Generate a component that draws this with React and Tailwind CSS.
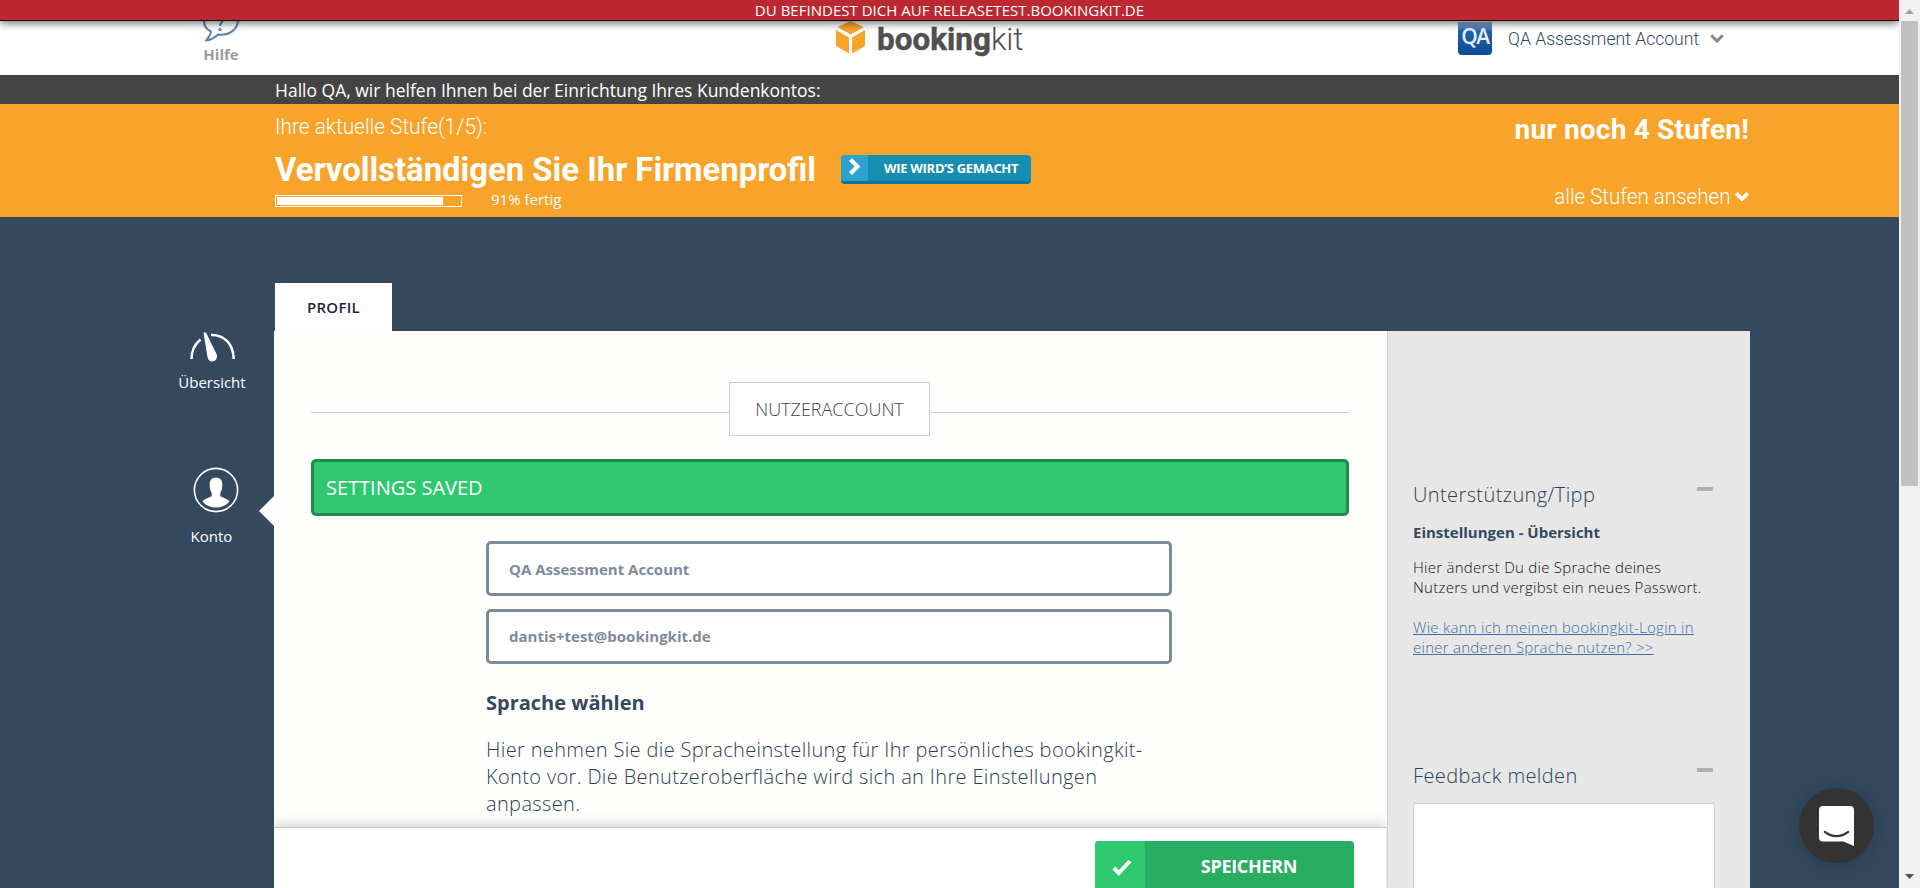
import React from "react";

const LOGO = "font-['Roboto',sans-serif]";

function Logo() {
  return (
    <svg width="190" height="54" viewBox="0 0 190 54" className="block">
      <g fill="#f7a42a">
        <path d="M14.5 0 L28 6 L14.5 13.6 L1.5 6 Z" />
        <path d="M0 9 L13 16.6 V32.6 L0 25 Z" />
        <path d="M29 9 L16 16.6 V32.6 L29 25 Z" />
      </g>
      <text x="41" y="28.5" textLength="146.500" lengthAdjust="spacingAndGlyphs" fontFamily="Roboto, sans-serif" fontSize="32" fill="#50504f">
        <tspan fontWeight="700" stroke="#50504f" strokeWidth="0.5">booking</tspan>
        <tspan fontWeight="300">kit</tspan>
      </text>
    </svg>
  );
}

function HelpIcon() {
  return (
    <svg width="38" height="22" viewBox="0 0 38 22" className="block" fill="none" stroke="#5a82ad" strokeWidth="2">
      <path d="M2 0 C2 5 5 8.500 9 10.500 C9 14 6 17 4 19.500 C9 19 13 16.500 16 13.500 C27 15 35 9 36 0" strokeLinejoin="round" />
      <path d="M21 -2 C21 1.500 18 1.500 18 5" />
      <circle cx="18" cy="8.500" r="1.600" fill="#5a82ad" stroke="none" />
    </svg>
  );
}

function GaugeIcon() {
  return (
    <svg width="46" height="31" viewBox="0 0 46 31" className="block">
      <path d="M1.500 27 C1.500 18 5 12 10.500 7.500" fill="none" stroke="#fff" strokeWidth="2.500" />
      <path d="M21 3 C34 2.500 43.500 12 43.700 27" fill="none" stroke="#fff" strokeWidth="2.500" />
      <path d="M13.500 1 Q15 -0.500 16.500 1.500 L27 23 Q27.500 29 22.500 29.500 Q18.500 29.500 17.500 25 Z" fill="#fff" />
    </svg>
  );
}

function UserIcon() {
  return (
    <svg width="46" height="46" viewBox="0 0 46 46" className="block">
      <circle cx="23" cy="23" r="21.600" fill="none" stroke="#fff" strokeWidth="1.600" />
      <path d="M23 10.500 C27.500 10.500 29.300 13.500 29.300 17.500 C29.300 21 28.700 24 27.300 26 V29 C30 31 34.500 31.500 36.500 34.500 C33 38.500 28.500 40.500 23 40.500 C17.500 40.500 13 38.500 9.500 34.500 C11.500 31.500 16 31 18.700 29 V26 C17.300 24 16.700 21 16.700 17.500 C16.700 13.500 18.500 10.500 23 10.500 Z" fill="#fff" />
    </svg>
  );
}

function Chevron({ className, width = 14, height = 9, stroke = 3 }) {
  return (
    <svg width={width} height={height} viewBox="0 0 14 9" className={className} fill="none" stroke="currentColor" strokeWidth={stroke}>
      <path d="M1.200 1.300 L7 7 L12.800 1.300" />
    </svg>
  );
}

function Header() {
  return (
    <header className="flex h-[54px] shrink-0 overflow-hidden bg-white">
      <div className="ml-[202px] flex w-[38px] flex-col items-center">
        <HelpIcon />
        <span className="mt-[1px] text-[15px] font-bold leading-[20px] text-[#9b9b9b]">Hilfe</span>
      </div>
      <div className="ml-[596px] w-[190px]">
        <Logo />
      </div>
      <div className="ml-[432px] flex">
        <div className="mt-px flex h-[33px] w-[34px] items-center justify-center rounded-b-[4px] bg-linear-to-b from-[#8fb0d6] from-0% via-[#1f5fa8] via-30% to-[#0b4c94] text-[21px] font-semibold leading-none tracking-[-1.5px] text-[#e4eefa]">
          <span className="-mt-[4px]">QA</span>
        </div>
        <div className="ml-[16px] mt-[6px] w-[190px]">
          <span className={`${LOGO} inline-block origin-left scale-x-[0.925] whitespace-nowrap text-[19px] font-light leading-[24px] text-[#34495e]`}>QA Assessment Account</span>
        </div>
        <Chevron className="ml-[12px] mt-[13px] text-[#7d8b99]" />
      </div>
    </header>
  );
}

function StepBanner() {
  return (
    <section className="flex h-[113px] shrink-0 justify-between bg-[#f8a42b] pl-[275px] pr-[150px] text-white">
      <div className="flex flex-col">
        <div className={`${LOGO} mt-[9px] origin-left scale-x-[0.946] whitespace-nowrap text-[22px] font-light leading-[28px]`}>Ihre aktuelle Stufe(1/5):</div>
        <div className="mt-[9px] flex h-[45px]">
          <div className="w-[566px]">
            <h1 className={`${LOGO} w-[566px] origin-left scale-x-[0.966] whitespace-nowrap text-[34px] font-bold leading-[38px]`}>Vervollständigen Sie Ihr Firmenprofil</h1>
          </div>
          <button className="mt-[5px] flex h-[29px] w-[190px] items-stretch overflow-hidden rounded-[4px] border-b-[3px] border-[#0c7599] bg-[#178db2]">
            <span className="flex w-[27px] items-center justify-center bg-[#2ca3cf]">
              <svg width="12" height="17" viewBox="0 0 12 17" fill="none" stroke="#fff" strokeWidth="4" className="-mt-[3px]">
                <path d="M1.500 1.500 L8.500 8.500 L1.500 15.500" />
              </svg>
            </span>
            <span className="ml-[16px] whitespace-nowrap text-[13px] font-bold leading-[26px] tracking-[-0.3px]">WIE WIRD’S GEMACHT</span>
          </button>
        </div>
        <div className="flex h-[12px]">
          <div className="h-[12px] w-[187px] border border-white p-px">
            <div className="h-[8px] w-[166px] bg-white" />
          </div>
          <span className="ml-[29px] -mt-[6px] whitespace-nowrap text-[15px] leading-[20px]">91% fertig</span>
        </div>
      </div>
      <div className={`${LOGO} flex flex-col items-end`}>
        <div className="mt-[9px] whitespace-nowrap text-[28px] font-bold leading-[34px] tracking-[0.2px]">nur noch 4 Stufen!</div>
        <div className="mt-[35px] flex items-center whitespace-nowrap text-[22px] font-light leading-[28px]">
          <span className="origin-right translate-y-px scale-x-[0.935]">alle Stufen ansehen</span>
          <Chevron className="ml-[5px]" stroke={3.6} />
        </div>
      </div>
    </section>
  );
}

function SideNav() {
  return (
    <nav className="flex w-[274px] shrink-0 flex-col text-[15px] leading-[20px] text-white">
      <div className="ml-[173px] mt-[115px] flex w-[78px] flex-col items-center">
        <div className="ml-[1px]"><GaugeIcon /></div>
        <span className="mt-[9px]">Übersicht</span>
      </div>
      <div className="ml-[173px] mt-[75px] flex">
        <div className="flex w-[77px] flex-col items-center">
          <div className="ml-[9px]"><UserIcon /></div>
          <span className="mt-[13px]">Konto</span>
        </div>
        <svg width="24" height="30" viewBox="0 0 24 30" className="mt-[29px]">
          <path d="M24 0 L9 15 L24 30 Z" fill="#fff" />
        </svg>
      </div>
    </nav>
  );
}

function AccountPanel() {
  return (
    <main className="relative h-[557px] w-[1113px] shrink-0 overflow-hidden bg-[#fefefc] pl-[37px] pr-[38px]">
      <div className="mt-[51px] flex h-[54px] items-start">
        <div className="mt-[30px] h-px w-[418px] bg-[#c9cacc]" />
        <div className="flex h-[54px] w-[201px] items-center justify-center border border-[#c9cacc] bg-white text-[18px] font-light text-[#444]">NUTZERACCOUNT</div>
        <div className="mt-[30px] h-px flex-1 bg-[#c9cacc]" />
      </div>
      <div className="mt-[23px] h-[57px] rounded-[5px] border-[3px] border-[#208a4c] bg-[#2ec96f] pl-[12px] text-[20px] leading-[51px] text-white">SETTINGS SAVED</div>
      <div className="ml-[175px] mt-[25px] flex w-[686px] flex-col">
        <div className="h-[55px] rounded-[5px] border-[3px] border-[#7d8b99] bg-white pl-[20px] text-[15px] font-bold leading-[51px] text-[#7d8b99]">QA Assessment Account</div>
        <div className="mt-[13px] h-[55px] rounded-[5px] border-[3px] border-[#7d8b99] bg-white pl-[20px] text-[15px] font-bold leading-[49px] text-[#7d8b99]">dantis+test@bookingkit.de</div>
        <h2 className="mt-[25px] text-[20px] font-bold leading-[28px] text-[#34495e]">Sprache wählen</h2>
        <p className="mt-[19px] whitespace-nowrap text-[20px] font-light leading-[27px] tracking-[0.36px] text-[#2b3f54]">
          Hier nehmen Sie die Spracheinstellung für Ihr persönliches bookingkit-<br />Konto vor. Die Benutzeroberfläche wird sich an Ihre Einstellungen<br />anpassen.
        </p>
      </div>
      <div className="absolute bottom-0 left-0 flex h-[61px] w-[1112px] justify-end border-t border-[#c6c6c6] bg-white pr-[32px] pt-[13px] shadow-[0_-2px_12px_rgba(0,0,0,0.2)]">
        <button className="flex h-[60px] w-[259px] overflow-hidden rounded-[4px] bg-[#29ae61] text-white">
          <span className="flex h-full w-[50px] justify-center bg-[#2ec96f]">
            <svg width="20" height="17" viewBox="0 0 20 17" className="ml-[4px] mt-[18px]" fill="none" stroke="#fff" strokeWidth="4">
              <path d="M1.800 9 L6.800 14 L18 2" />
            </svg>
          </span>
          <span className="flex-1 pr-px text-center text-[18px] font-bold leading-[51px] tracking-[-0.3px]">SPEICHERN</span>
        </button>
      </div>
    </main>
  );
}

function TipPanel() {
  return (
    <aside className="h-[557px] w-[363px] shrink-0 overflow-hidden border-l border-[#d2d2d3] bg-[#e7e7e7] pl-[25px] pr-[35px]">
      <div className="mt-[150px] flex justify-between">
        <h3 className="text-[20px] font-light leading-[28px] tracking-[0.4px] text-[#2b3f54]">Unterstützung/Tipp</h3>
        <span className="mr-[2px] mt-[6px] h-[4px] w-[16px] bg-[#b0b0b0]" />
      </div>
      <h4 className="mt-[13px] text-[15px] font-bold leading-[20px] text-[#34495e]">Einstellungen - Übersicht</h4>
      <p className="mt-[15px] whitespace-nowrap text-[15px] font-light leading-[20px] tracking-[0.26px] text-[#111]">
        Hier änderst Du die Sprache deines<br />Nutzers und vergibst ein neues Passwort.
      </p>
      <a className="mt-[20px] block whitespace-nowrap text-[15px] font-light leading-[20px] tracking-[0.26px] text-[#3f6da0] underline">
        Wie kann ich meinen bookingkit-Login in<br />einer anderen Sprache nutzen? &gt;&gt;
      </a>
      <div className="mt-[105px] flex justify-between">
        <h3 className="text-[20px] font-light leading-[28px] tracking-[0.4px] text-[#2b3f54]">Feedback melden</h3>
        <span className="mr-[2px] mt-[6px] h-[4px] w-[16px] bg-[#b0b0b0]" />
      </div>
      <div className="mt-[13px] h-[120px] rounded-[2px] border border-[#cfcfd0] bg-white" />
    </aside>
  );
}

function Scrollbar() {
  return (
    <div className="flex h-full w-[21px] shrink-0 flex-col items-center justify-between bg-[#f1f1f1]">
      <svg width="9" height="5" viewBox="0 0 9 5" className="mt-[9px]"><path d="M4.500 0 L9 5 H0 Z" fill="#a3a3a3" /></svg>
      <div className="mb-auto mt-[7px] h-[465px] w-[17px] bg-[#c1c1c1]" />
      <svg width="9" height="5" viewBox="0 0 9 5" className="mb-[9px]"><path d="M4.500 5 L9 0 H0 Z" fill="#505050" /></svg>
    </div>
  );
}

function ChatBubble() {
  return (
    <div className="absolute left-[1799px] top-[788px] flex h-[75px] w-[75px] items-center justify-center rounded-full bg-[#333] shadow-[0_2px_20px_rgba(0,0,0,0.2)]">
      <svg width="35" height="40" viewBox="0 0 35 40" className="mt-[1px]">
        <path d="M4 0 H31 Q35 0 35 4 V40 Q30 38 24.500 35.500 H4 Q0 35.500 0 31.500 V4 Q0 0 4 0 Z" fill="#fff" />
        <path d="M5.800 25.800 Q17.500 34.500 29.200 25.800" fill="none" stroke="#333" strokeWidth="2.200" strokeLinecap="round" />
      </svg>
    </div>
  );
}

export default function App() {
  return (
    <div className="flex h-[888px] w-[1920px] overflow-hidden font-['Open_Sans',sans-serif]">
      <div className="relative flex w-[1899px] shrink-0 flex-col overflow-hidden bg-[#34495e]">
        <div className="z-10 h-[21px] shrink-0 border-b border-black bg-[#bb2831] text-center text-[15px] leading-[21px] tracking-[0.02px] text-white shadow-[0_2px_8px_rgba(0,0,0,0.6)]">
          DU BEFINDEST DICH AUF RELEASETEST.BOOKINGKIT.DE
        </div>
        <Header />
        <div className="h-[29px] shrink-0 bg-[#444] pl-[275px] text-[17.500px] leading-[30px] text-white">
          Hallo QA, wir helfen Ihnen bei der Einrichtung Ihres Kundenkontos:
        </div>
        <StepBanner />
        <div className="flex h-[671px] shrink-0">
          <SideNav />
          <div className="flex flex-col">
            <div className="ml-px mt-[66px] flex h-[48px] w-[117px] items-center justify-center bg-white text-[15px] font-semibold tracking-[0.3px] text-[#1f2438]">PROFIL</div>
            <div className="flex">
              <AccountPanel />
              <TipPanel />
            </div>
          </div>
        </div>
        <ChatBubble />
      </div>
      <Scrollbar />
    </div>
  );
}
